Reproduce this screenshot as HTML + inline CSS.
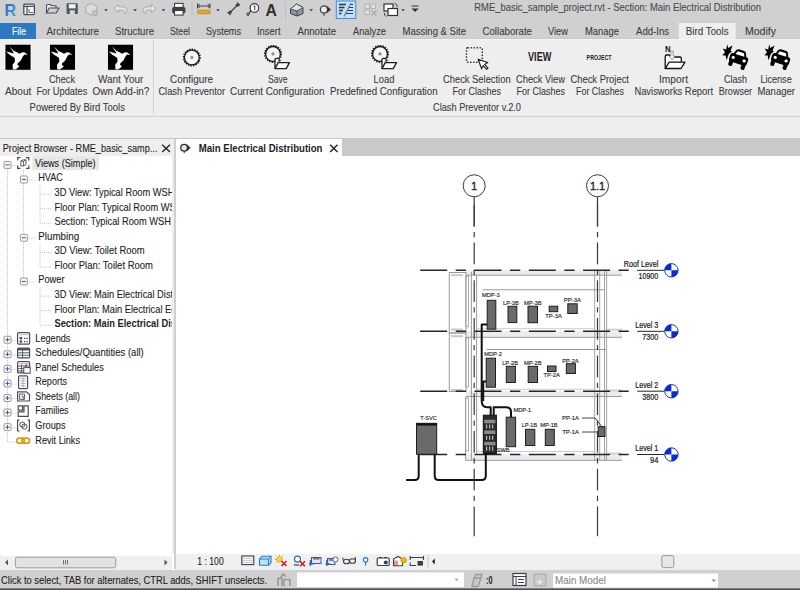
<!DOCTYPE html>
<html><head><meta charset="utf-8"><style>
html,body{margin:0;padding:0;width:800px;height:590px;overflow:hidden;background:#fff}
svg{display:block;font-family:"Liberation Sans",sans-serif}
</style></head><body>
<svg width="800" height="590" viewBox="0 0 800 590">
<rect x="0" y="0" width="800" height="39" fill="#d0d0d0" />
<rect x="0" y="39" width="800" height="77" fill="#eeeeee" />
<rect x="0" y="38" width="800" height="1" fill="#c9c9c9" />
<rect x="0" y="39" width="800" height="1" fill="#f4f4f4" />
<rect x="0" y="116" width="800" height="1" fill="#d2d2d2" />
<rect x="0" y="117" width="800" height="21" fill="#eeeeee" />
<rect x="0" y="138" width="800" height="1" fill="#c6c6c6" />
<text x="474.3" y="11.3" font-size="10.2" fill="#4a4a4a" textLength="286.7" lengthAdjust="spacingAndGlyphs"  stroke="#4a4a4a" stroke-width="0.1">RME_basic_sample_project.rvt - Section: Main Electrical Distribution</text>
<rect x="0" y="23" width="36" height="16" fill="#2b79c2" />
<text x="12" y="34.5" font-size="10.2" fill="#ffffff" textLength="14" lengthAdjust="spacingAndGlyphs"  stroke="#ffffff" stroke-width="0.1">File</text>
<rect x="678.7" y="23" width="57" height="16" fill="#eeeeee" />
<text x="46.5" y="34.5" font-size="10.2" fill="#3c3c3c" textLength="52.5" lengthAdjust="spacingAndGlyphs"  stroke="#3c3c3c" stroke-width="0.1">Architecture</text>
<text x="115" y="34.5" font-size="10.2" fill="#3c3c3c" textLength="39" lengthAdjust="spacingAndGlyphs"  stroke="#3c3c3c" stroke-width="0.1">Structure</text>
<text x="170" y="34.5" font-size="10.2" fill="#3c3c3c" textLength="20" lengthAdjust="spacingAndGlyphs"  stroke="#3c3c3c" stroke-width="0.1">Steel</text>
<text x="206" y="34.5" font-size="10.2" fill="#3c3c3c" textLength="35" lengthAdjust="spacingAndGlyphs"  stroke="#3c3c3c" stroke-width="0.1">Systems</text>
<text x="257" y="34.5" font-size="10.2" fill="#3c3c3c" textLength="23.5" lengthAdjust="spacingAndGlyphs"  stroke="#3c3c3c" stroke-width="0.1">Insert</text>
<text x="297.5" y="34.5" font-size="10.2" fill="#3c3c3c" textLength="38.5" lengthAdjust="spacingAndGlyphs"  stroke="#3c3c3c" stroke-width="0.1">Annotate</text>
<text x="353" y="34.5" font-size="10.2" fill="#3c3c3c" textLength="33" lengthAdjust="spacingAndGlyphs"  stroke="#3c3c3c" stroke-width="0.1">Analyze</text>
<text x="402.5" y="34.5" font-size="10.2" fill="#3c3c3c" textLength="63.5" lengthAdjust="spacingAndGlyphs"  stroke="#3c3c3c" stroke-width="0.1">Massing &amp; Site</text>
<text x="482.5" y="34.5" font-size="10.2" fill="#3c3c3c" textLength="49.5" lengthAdjust="spacingAndGlyphs"  stroke="#3c3c3c" stroke-width="0.1">Collaborate</text>
<text x="548" y="34.5" font-size="10.2" fill="#3c3c3c" textLength="20" lengthAdjust="spacingAndGlyphs"  stroke="#3c3c3c" stroke-width="0.1">View</text>
<text x="585" y="34.5" font-size="10.2" fill="#3c3c3c" textLength="33.9" lengthAdjust="spacingAndGlyphs"  stroke="#3c3c3c" stroke-width="0.1">Manage</text>
<text x="636" y="34.5" font-size="10.2" fill="#3c3c3c" textLength="33" lengthAdjust="spacingAndGlyphs"  stroke="#3c3c3c" stroke-width="0.1">Add-Ins</text>
<text x="685.8" y="34.5" font-size="10.2" fill="#3c3c3c" textLength="42.8" lengthAdjust="spacingAndGlyphs"  stroke="#3c3c3c" stroke-width="0.1">Bird Tools</text>
<text x="745" y="34.5" font-size="10.2" fill="#3c3c3c" textLength="31" lengthAdjust="spacingAndGlyphs"  stroke="#3c3c3c" stroke-width="0.1">Modify</text>
<text x="5" y="94.6" font-size="10.2" fill="#3c3c3c" textLength="26.4" lengthAdjust="spacingAndGlyphs"  stroke="#3c3c3c" stroke-width="0.1">About</text>
<text x="49" y="83.0" font-size="10.2" fill="#3c3c3c" textLength="26" lengthAdjust="spacingAndGlyphs"  stroke="#3c3c3c" stroke-width="0.1">Check</text>
<text x="36.4" y="94.6" font-size="10.2" fill="#3c3c3c" textLength="51.0" lengthAdjust="spacingAndGlyphs"  stroke="#3c3c3c" stroke-width="0.1">For Updates</text>
<text x="98" y="83.0" font-size="10.2" fill="#3c3c3c" textLength="45.4" lengthAdjust="spacingAndGlyphs"  stroke="#3c3c3c" stroke-width="0.1">Want Your</text>
<text x="92.6" y="94.6" font-size="10.2" fill="#3c3c3c" textLength="56.8" lengthAdjust="spacingAndGlyphs"  stroke="#3c3c3c" stroke-width="0.1">Own Add-in?</text>
<text x="29.6" y="111.4" font-size="10.2" fill="#3c3c3c" textLength="95.4" lengthAdjust="spacingAndGlyphs"  stroke="#3c3c3c" stroke-width="0.1">Powered By Bird Tools</text>
<rect x="153" y="40" width="1" height="75" fill="#d4d4d4" />
<text x="170" y="83.0" font-size="10.2" fill="#3c3c3c" textLength="43" lengthAdjust="spacingAndGlyphs"  stroke="#3c3c3c" stroke-width="0.1">Configure</text>
<text x="158.4" y="94.6" font-size="10.2" fill="#3c3c3c" textLength="66.6" lengthAdjust="spacingAndGlyphs"  stroke="#3c3c3c" stroke-width="0.1">Clash Preventor</text>
<text x="268" y="83.0" font-size="10.2" fill="#3c3c3c" textLength="19.6" lengthAdjust="spacingAndGlyphs"  stroke="#3c3c3c" stroke-width="0.1">Save</text>
<text x="230" y="94.6" font-size="10.2" fill="#3c3c3c" textLength="94.4" lengthAdjust="spacingAndGlyphs"  stroke="#3c3c3c" stroke-width="0.1">Current Configuration</text>
<text x="373.6" y="83.0" font-size="10.2" fill="#3c3c3c" textLength="20.8" lengthAdjust="spacingAndGlyphs"  stroke="#3c3c3c" stroke-width="0.1">Load</text>
<text x="330" y="94.6" font-size="10.2" fill="#3c3c3c" textLength="107.6" lengthAdjust="spacingAndGlyphs"  stroke="#3c3c3c" stroke-width="0.1">Predefined Configuration</text>
<text x="443" y="83.0" font-size="10.2" fill="#3c3c3c" textLength="67.6" lengthAdjust="spacingAndGlyphs"  stroke="#3c3c3c" stroke-width="0.1">Check Selection</text>
<text x="452.6" y="94.6" font-size="10.2" fill="#3c3c3c" textLength="48.4" lengthAdjust="spacingAndGlyphs"  stroke="#3c3c3c" stroke-width="0.1">For Clashes</text>
<text x="516" y="83.0" font-size="10.2" fill="#3c3c3c" textLength="49" lengthAdjust="spacingAndGlyphs"  stroke="#3c3c3c" stroke-width="0.1">Check View</text>
<text x="516.6" y="94.6" font-size="10.2" fill="#3c3c3c" textLength="48.4" lengthAdjust="spacingAndGlyphs"  stroke="#3c3c3c" stroke-width="0.1">For Clashes</text>
<text x="570.4" y="83.0" font-size="10.2" fill="#3c3c3c" textLength="58.6" lengthAdjust="spacingAndGlyphs"  stroke="#3c3c3c" stroke-width="0.1">Check Project</text>
<text x="576" y="94.6" font-size="10.2" fill="#3c3c3c" textLength="48" lengthAdjust="spacingAndGlyphs"  stroke="#3c3c3c" stroke-width="0.1">For Clashes</text>
<text x="659" y="83.0" font-size="10.2" fill="#3c3c3c" textLength="29" lengthAdjust="spacingAndGlyphs"  stroke="#3c3c3c" stroke-width="0.1">Import</text>
<text x="634.4" y="94.6" font-size="10.2" fill="#3c3c3c" textLength="78.6" lengthAdjust="spacingAndGlyphs"  stroke="#3c3c3c" stroke-width="0.1">Navisworks Report</text>
<text x="723.9" y="83.0" font-size="10.2" fill="#3c3c3c" textLength="23.1" lengthAdjust="spacingAndGlyphs"  stroke="#3c3c3c" stroke-width="0.1">Clash</text>
<text x="718.8" y="94.6" font-size="10.2" fill="#3c3c3c" textLength="33.2" lengthAdjust="spacingAndGlyphs"  stroke="#3c3c3c" stroke-width="0.1">Browser</text>
<text x="760.4" y="83.0" font-size="10.2" fill="#3c3c3c" textLength="31.3" lengthAdjust="spacingAndGlyphs"  stroke="#3c3c3c" stroke-width="0.1">License</text>
<text x="757.4" y="94.6" font-size="10.2" fill="#3c3c3c" textLength="37.6" lengthAdjust="spacingAndGlyphs"  stroke="#3c3c3c" stroke-width="0.1">Manager</text>
<text x="433" y="111.4" font-size="10.2" fill="#3c3c3c" textLength="88" lengthAdjust="spacingAndGlyphs"  stroke="#3c3c3c" stroke-width="0.1">Clash Preventor v.2.0</text>
<defs><linearGradient id="rg" x1="0" y1="0" x2="1" y2="1"><stop offset="0" stop-color="#2a5cb8"/><stop offset="1" stop-color="#3fb0e8"/></linearGradient></defs>
<text x="4.6" y="16.1" font-size="16.5" fill="url(#rg)" font-weight="bold" textLength="11.6" lengthAdjust="spacingAndGlyphs" >R</text>
<rect x="23.8" y="4.2" width="10.6" height="10.4" rx="1" fill="#f4f4f4" stroke="#4a5058" stroke-width="1.3"/>
<path d="M23.8,6.3 H34.4 M27,6.3 V14.6" stroke="#4a5058" stroke-width="1.2" fill="none"/>
<path d="M29,9 V12.5 H33" stroke="#4a5058" stroke-width="0.8" fill="none"/>
<path d="M46.5,13 V5.5 Q46.5,4.5 47.5,4.5 H50.5 L51.5,5.8 H56 V8" fill="#e8eaee" stroke="#4a5058" stroke-width="1.1"/>
<path d="M46.5,13 L49.2,8 H59 L56.3,13 Z" fill="#c9ced6" stroke="#4a5058" stroke-width="1.1"/>
<rect x="66.6" y="3.2" width="11.2" height="10.9" rx="1" fill="#4b5563"/>
<rect x="68.8" y="4.2" width="6.8" height="4.2" fill="#f2f2f2" />
<rect x="69.8" y="10.3" width="5" height="3.8" fill="#d8d8d8" />
<path d="M91.3,3.3 L96.8,6.3 V12.3 L91.3,15.3 L85.8,12.3 V6.3 Z" fill="#dcdcdc" stroke="#a8a8a8" stroke-width="1"/>
<circle cx="95" cy="13" r="2.6" fill="#c8c8c8" stroke="#a0a0a0" stroke-width="0.8"/>
<path d="M104.2,9.2 h3.6 l-1.8,2 z" fill="#333"/>
<path d="M114,8.5 L118.5,4.5 V6.8 H122 Q127,6.8 127,10.8 Q127,13.5 124,13.5 Q125,12.3 124.5,11 Q124,10.2 122,10.2 H118.5 V12.5 Z" fill="#e4e4e4" stroke="#a6a6a6" stroke-width="0.9"/>
<path d="M133.2,9.2 h3.6 l-1.8,2 z" fill="#333"/>
<path d="M156,8.5 L151.5,4.5 V6.8 H148 Q143,6.8 143,10.8 Q143,13.5 146,13.5 Q145,12.3 145.5,11 Q146,10.2 148,10.2 H151.5 V12.5 Z" fill="#e4e4e4" stroke="#a6a6a6" stroke-width="0.9"/>
<path d="M161.7,9.2 h3.6 l-1.8,2 z" fill="#333"/>
<rect x="174.5" y="3.4" width="8.6" height="4" fill="#fff" stroke="#3a4048" stroke-width="1.1"/>
<rect x="172.2" y="7" width="13.2" height="6.2" rx="1.5" fill="#3a4048"/>
<rect x="174.5" y="10.5" width="8.6" height="4.6" fill="#fff" stroke="#3a4048" stroke-width="1.1"/>
<rect x="191.5" y="2" width="1" height="17" fill="#bdbdbd" />
<path d="M197.5,6 H210 M197.5,6 l2.3,-1.8 M197.5,6 l2.3,1.8 M210,6 l-2.3,-1.8 M210,6 l-2.3,1.8 M197.5,3.5 V8.5 M210,3.5 V8.5" stroke="#3a4048" stroke-width="1" fill="none"/>
<rect x="197.3" y="10.3" width="13" height="3.5" rx="1.5" fill="#e8a91c" stroke="#a87508" stroke-width="0.6"/>
<path d="M216.2,9.2 h3.6 l-1.8,2 z" fill="#333"/>
<path d="M229,13.5 L238.5,4 M227.5,12 L230.5,15 M237,2.5 L240,5.5 M229,13.5 l1,-3 M229,13.5 l3,-1 M238.5,4 l-3,1 M238.5,4 l-1,3" stroke="#3a4048" stroke-width="1.1" fill="none"/>
<path d="M248.6,13.6 L251.4,10.2" stroke="#3a4048" stroke-width="1.2"/>
<circle cx="248" cy="14.2" r="1.3" fill="#8a9098" stroke="#3a4048" stroke-width="0.8"/>
<circle cx="254.4" cy="8" r="4.3" fill="#fff" stroke="#3a4048" stroke-width="1.3"/>
<path d="M253.6,6.6 L254.8,5.6 V10.4" stroke="#3a4048" stroke-width="1" fill="none"/>
<text x="265.6" y="15.8" font-size="16.5" fill="#2f2f2f" font-weight="bold" textLength="11.4" lengthAdjust="spacingAndGlyphs" >A</text>
<rect x="285" y="2" width="1" height="17" fill="#bdbdbd" />
<path d="M290.5,9 L296.5,4 L303,7.5 V13.5 L297,16 L290.5,13.5 Z" fill="#8f969e" stroke="#3a4048" stroke-width="1"/>
<path d="M290.5,9 L296.5,4 L303,7.5 L297,11 Z" fill="#dfe3e8" stroke="#3a4048" stroke-width="0.8"/>
<path d="M297,11 V16" stroke="#3a4048" stroke-width="0.8"/>
<path d="M309.4,9.2 h3.6 l-1.8,2 z" fill="#333"/>
<circle cx="324" cy="9.5" r="3.6" fill="#e8e8e8" stroke="#3a4048" stroke-width="1.3"/>
<path d="M327,6 L331,9.5 L327,13 Z" fill="#2e3238"/>
<path d="M324,13 V16" stroke="#3a4048" stroke-width="1"/>
<rect x="336.3" y="1" width="19.5" height="17.5" fill="#c8e0f6" stroke="#3c8ee0" stroke-width="1"/>
<path d="M339,4.5 H346" stroke="#2b3a4a" stroke-width="1.6"/>
<path d="M339,7.5 H344.5" stroke="#2b3a4a" stroke-width="1.6"/>
<path d="M339,10.5 H343" stroke="#2b3a4a" stroke-width="1.6"/>
<path d="M339,13.5 H341.5" stroke="#2b3a4a" stroke-width="1.6"/>
<path d="M350,4.5 H353" stroke="#2b3a4a" stroke-width="1"/>
<path d="M348.5,7.5 H353" stroke="#2b3a4a" stroke-width="1"/>
<path d="M347,10.5 H353" stroke="#2b3a4a" stroke-width="1"/>
<path d="M345.5,13.5 H353" stroke="#2b3a4a" stroke-width="1"/>
<path d="M351,3 L344,16.5" stroke="#3c8ee0" stroke-width="1.3"/>
<path d="M365,4 h4.5 v4.5 h-4.5z M371,4 h4.5 v4.5 h-4.5z M365,10 h4.5 v4.5 h-4.5z" fill="#e2e2e2" stroke="#b0b0b0" stroke-width="0.9"/>
<path d="M371.5,10.5 L376.5,15.5 M376.5,10.5 L371.5,15.5" stroke="#a8a8a8" stroke-width="1.2"/>
<rect x="384" y="4" width="9" height="7" fill="#fff" stroke="#2e3238" stroke-width="1.2"/>
<rect x="388" y="8.5" width="9.5" height="7" fill="#fff" stroke="#2e3238" stroke-width="1.2"/>
<path d="M394.5,3 l2.5,2 v2 M384.5,13 v2 l2,1.5" stroke="#2e3238" stroke-width="0.9" fill="none"/>
<path d="M401.3,9.2 h3.6 l-1.8,2 z" fill="#333"/>
<path d="M411.5,6 h7.2" stroke="#333" stroke-width="1"/>
<path d="M411.5,8.5 h7.2 l-3.6,3.5 z" fill="#333"/>
<rect x="5" y="44.2" width="26" height="26" fill="#000" stroke="#fff" stroke-width="0.8"/>
<path transform="translate(5,44.2)" d="M4.5,2.2 L9,6.8 L11.5,7.8 L14.5,9.6 L17.5,8 L19.8,8.2 L22.8,10.8 L19.5,10.2 L17.8,12.4 L15.8,16.4 L12.8,19 L12.4,20.6 L14.4,22.4 L10.6,25.2 L7.8,25 L7.6,20.6 L10,17.4 L9.6,13.6 L5,10.8 L1.2,7.4 L5.2,8.4 L8.6,9.4 L8.2,7.8 Z" fill="#fff"/>
<rect x="49.4" y="44.2" width="26" height="26" fill="#000" stroke="#fff" stroke-width="0.8"/>
<path transform="translate(49.4,44.2)" d="M4.5,2.2 L9,6.8 L11.5,7.8 L14.5,9.6 L17.5,8 L19.8,8.2 L22.8,10.8 L19.5,10.2 L17.8,12.4 L15.8,16.4 L12.8,19 L12.4,20.6 L14.4,22.4 L10.6,25.2 L7.8,25 L7.6,20.6 L10,17.4 L9.6,13.6 L5,10.8 L1.2,7.4 L5.2,8.4 L8.6,9.4 L8.2,7.8 Z" fill="#fff"/>
<rect x="107.6" y="44.2" width="26" height="26" fill="#000" stroke="#fff" stroke-width="0.8"/>
<path transform="translate(107.6,44.2)" d="M4.5,2.2 L9,6.8 L11.5,7.8 L14.5,9.6 L17.5,8 L19.8,8.2 L22.8,10.8 L19.5,10.2 L17.8,12.4 L15.8,16.4 L12.8,19 L12.4,20.6 L14.4,22.4 L10.6,25.2 L7.8,25 L7.6,20.6 L10,17.4 L9.6,13.6 L5,10.8 L1.2,7.4 L5.2,8.4 L8.6,9.4 L8.2,7.8 Z" fill="#fff"/>
<circle cx="191.8" cy="57.5" r="8.2" fill="none" stroke="#1a1a1a" stroke-width="1.6" stroke-dasharray="1.4 1.15"/>
<circle cx="191.8" cy="57.5" r="7.3999999999999995" fill="#f6f6f6" stroke="#1a1a1a" stroke-width="1.3"/>
<circle cx="191.8" cy="57.5" r="1.2" fill="#c8c8c8" stroke="#6a6a6a" stroke-width="0.8"/>
<circle cx="273" cy="53.9" r="8.2" fill="none" stroke="#1a1a1a" stroke-width="1.6" stroke-dasharray="1.4 1.15"/>
<circle cx="273" cy="53.9" r="7.3999999999999995" fill="#f6f6f6" stroke="#1a1a1a" stroke-width="1.3"/>
<circle cx="273" cy="53.9" r="1.2" fill="#c8c8c8" stroke="#6a6a6a" stroke-width="0.8"/>
<path d="M275,68.6 V59.599999999999994 Q275,58.3 276.2,58.3 H279 L(280.5,),59.8 H285 V62.599999999999994" fill="#fff" stroke="#1e1e1e" stroke-width="1.3"/>
<path d="M275,68.6 L278.2,62.599999999999994 H289.5 L286.2,68.6 Z" fill="#fff" stroke="#1e1e1e" stroke-width="1.3" stroke-linejoin="round"/>
<path d="M279.5,56.5 V61.5 M277.8,59.8 l1.7,2 l1.7,-2" stroke="#444" stroke-width="0.9" fill="none"/>
<circle cx="380" cy="53.9" r="8.2" fill="none" stroke="#1a1a1a" stroke-width="1.6" stroke-dasharray="1.4 1.15"/>
<circle cx="380" cy="53.9" r="7.3999999999999995" fill="#f6f6f6" stroke="#1a1a1a" stroke-width="1.3"/>
<circle cx="380" cy="53.9" r="1.2" fill="#c8c8c8" stroke="#6a6a6a" stroke-width="0.8"/>
<path d="M382,68.6 V59.599999999999994 Q382,58.3 383.2,58.3 H386 L(387.5,),59.8 H392 V62.599999999999994" fill="#fff" stroke="#1e1e1e" stroke-width="1.3"/>
<path d="M382,68.6 L385.2,62.599999999999994 H396.5 L393.2,68.6 Z" fill="#fff" stroke="#1e1e1e" stroke-width="1.3" stroke-linejoin="round"/>
<path d="M386.5,56.5 V61.5 M384.8,59.8 l1.7,2 l1.7,-2" stroke="#444" stroke-width="0.9" fill="none"/>
<rect x="466.5" y="47.7" width="15.8" height="14.6" rx="1" fill="none" stroke="#2a3340" stroke-width="1.4" stroke-dasharray="1.4 1.6"/>
<path d="M478.1,59.2 L487.8,62.6 L484.6,64.4 L488,68.2 L486.6,69.3 L483.2,65.6 L481.6,68.8 Z" fill="#fff" stroke="#1e2630" stroke-width="1.2" stroke-linejoin="round"/>
<text x="528" y="61.2" font-size="12" fill="#1e1e1e" font-weight="bold" textLength="23.4" lengthAdjust="spacingAndGlyphs" >VIEW</text>
<text x="586.6" y="60.2" font-size="7.6" fill="#1e1e1e" font-weight="bold" textLength="25" lengthAdjust="spacingAndGlyphs" >PROJECT</text>
<text x="665" y="51.6" font-size="8.2" fill="#111" font-weight="bold" textLength="5.6" lengthAdjust="spacingAndGlyphs" >N</text>
<path d="M665.2,68.5 V56.5 Q665.2,55 666.7,55 H669.5 L671.5,57 H680 Q681.3,57 681.3,58.3 V61.8" fill="#fff" stroke="#111" stroke-width="1.3"/>
<path d="M665.2,68.5 L669.2,62.2 H685 L681,68.5 Z" fill="#fff" stroke="#111" stroke-width="1.3" stroke-linejoin="round"/>
<path d="M670.8,51 H673.2 V56 H675 L672,60 L669,56 H670.8 Z" fill="#f4f4f4" stroke="#888" stroke-width="0.8"/>
<g transform="translate(719,42)"><path d="M8.2,2.2 L9.2,6 L13.6,3.6 L11.6,8.4 L12.8,9.4 L9.8,12 L7.6,18.2 L6.6,13.4 L3.2,13.2 L6,10.4 L3.8,6.6 L7.2,7.4 Z" fill="#000"/><g transform="translate(19.8,16.8) rotate(18) scale(1.06)"><path d="M-6.5,-3 L-4.6,-7.4 Q-4,-8.6 -2.6,-8.6 H2.6 Q4,-8.6 4.6,-7.4 L6.5,-3 Z" fill="#000"/><rect x="-8.8" y="-3.6" width="17.6" height="8.4" rx="2.4" fill="#000"/><rect x="-8" y="3" width="3.8" height="5.8" rx="1.2" fill="#000"/><rect x="4.2" y="3" width="3.8" height="5.8" rx="1.2" fill="#000"/><path d="M-4.3,-3.4 L-3.1,-6.6 H3.1 L4.3,-3.4 Z" fill="#fff"/><ellipse cx="-5.4" cy="0.4" rx="1.6" ry="1.4" fill="#fff"/><ellipse cx="5.4" cy="0.4" rx="1.6" ry="1.4" fill="#fff"/></g></g>
<g transform="translate(761,42)"><path d="M8.2,2.2 L9.2,6 L13.6,3.6 L11.6,8.4 L12.8,9.4 L9.8,12 L7.6,18.2 L6.6,13.4 L3.2,13.2 L6,10.4 L3.8,6.6 L7.2,7.4 Z" fill="#000"/><g transform="translate(19.8,16.8) rotate(18) scale(1.06)"><path d="M-6.5,-3 L-4.6,-7.4 Q-4,-8.6 -2.6,-8.6 H2.6 Q4,-8.6 4.6,-7.4 L6.5,-3 Z" fill="#000"/><rect x="-8.8" y="-3.6" width="17.6" height="8.4" rx="2.4" fill="#000"/><rect x="-8" y="3" width="3.8" height="5.8" rx="1.2" fill="#000"/><rect x="4.2" y="3" width="3.8" height="5.8" rx="1.2" fill="#000"/><path d="M-4.3,-3.4 L-3.1,-6.6 H3.1 L4.3,-3.4 Z" fill="#fff"/><ellipse cx="-5.4" cy="0.4" rx="1.6" ry="1.4" fill="#fff"/><ellipse cx="5.4" cy="0.4" rx="1.6" ry="1.4" fill="#fff"/></g></g>
<rect x="0" y="139" width="174" height="17" fill="#eeeeee" />
<text x="2.75" y="151.8" font-size="10.2" fill="#1e1e1e" textLength="154.7" lengthAdjust="spacingAndGlyphs"  stroke="#1e1e1e" stroke-width="0.1">Project Browser - RME_basic_samp...</text>
<rect x="0" y="156" width="172" height="413" fill="#ffffff" />
<rect x="172" y="156" width="2" height="398" fill="#eeeeee" />
<rect x="174" y="139" width="2" height="430" fill="#cfcfcf" />
<defs><clipPath id="treeclip"><rect x="0" y="156" width="172" height="398"/></clipPath></defs>
<g clip-path="url(#treeclip)">
<rect x="32.4" y="156.2" width="66.6" height="14" fill="#e6e6e6" />
<line x1="7.5" y1="168" x2="7.5" y2="441.63" stroke="#c4c4c4" stroke-width="1" stroke-dasharray="1,1"/>
<line x1="7.5" y1="442.13" x2="17" y2="442.13" stroke="#c4c4c4" stroke-width="1" stroke-dasharray="1,1"/>
<line x1="23.5" y1="169" x2="23.5" y2="281.36" stroke="#c4c4c4" stroke-width="1" stroke-dasharray="1,1"/>
<line x1="11.5" y1="165.4" x2="17" y2="165.4" stroke="#c4c4c4" stroke-width="1" stroke-dasharray="1,1"/>
<rect x="4.0" y="161.4" width="7" height="7" rx="1" fill="#f6f6f6" stroke="#9a9a9a" stroke-width="1"/>
<line x1="5.5" y1="164.9" x2="9.5" y2="164.9" stroke="#3c5aa8" stroke-width="1"/>
<text x="35" y="166.8" font-size="10.2" fill="#1e1e1e" textLength="60.6" lengthAdjust="spacingAndGlyphs"  stroke="#1e1e1e" stroke-width="0.1">Views (Simple)</text>
<line x1="27.5" y1="179.97" x2="36" y2="179.97" stroke="#c4c4c4" stroke-width="1" stroke-dasharray="1,1"/>
<rect x="20.4" y="175.97" width="7" height="7" rx="1" fill="#f6f6f6" stroke="#9a9a9a" stroke-width="1"/>
<line x1="21.9" y1="179.47" x2="25.9" y2="179.47" stroke="#3c5aa8" stroke-width="1"/>
<text x="38.2" y="181.37" font-size="10.2" fill="#1e1e1e" textLength="24.8" lengthAdjust="spacingAndGlyphs"  stroke="#1e1e1e" stroke-width="0.1">HVAC</text>
<line x1="40" y1="185.37" x2="40" y2="222.78" stroke="#c4c4c4" stroke-width="1" stroke-dasharray="1,1"/>
<line x1="40" y1="194.14" x2="52" y2="194.14" stroke="#c4c4c4" stroke-width="1" stroke-dasharray="1,1"/>
<text x="54.5" y="195.94" font-size="10.2" fill="#1e1e1e" textLength="120.0" lengthAdjust="spacingAndGlyphs"  stroke="#1e1e1e" stroke-width="0.1">3D View: Typical Room WSH</text>
<line x1="40" y1="208.70999999999998" x2="52" y2="208.70999999999998" stroke="#c4c4c4" stroke-width="1" stroke-dasharray="1,1"/>
<text x="54.5" y="210.51" font-size="10.2" fill="#1e1e1e" textLength="127.9" lengthAdjust="spacingAndGlyphs"  stroke="#1e1e1e" stroke-width="0.1">Floor Plan: Typical Room WSH</text>
<line x1="40" y1="223.28" x2="52" y2="223.28" stroke="#c4c4c4" stroke-width="1" stroke-dasharray="1,1"/>
<text x="54.5" y="225.08" font-size="10.2" fill="#1e1e1e" textLength="116.5" lengthAdjust="spacingAndGlyphs"  stroke="#1e1e1e" stroke-width="0.1">Section: Typical Room WSH</text>
<line x1="27.5" y1="238.25" x2="36" y2="238.25" stroke="#c4c4c4" stroke-width="1" stroke-dasharray="1,1"/>
<rect x="20.4" y="234.25" width="7" height="7" rx="1" fill="#f6f6f6" stroke="#9a9a9a" stroke-width="1"/>
<line x1="21.9" y1="237.75" x2="25.9" y2="237.75" stroke="#3c5aa8" stroke-width="1"/>
<text x="38.2" y="239.65" font-size="10.2" fill="#1e1e1e" textLength="41.0" lengthAdjust="spacingAndGlyphs"  stroke="#1e1e1e" stroke-width="0.1">Plumbing</text>
<line x1="40" y1="243.65" x2="40" y2="266.49" stroke="#c4c4c4" stroke-width="1" stroke-dasharray="1,1"/>
<line x1="40" y1="252.42" x2="52" y2="252.42" stroke="#c4c4c4" stroke-width="1" stroke-dasharray="1,1"/>
<text x="54.5" y="254.22" font-size="10.2" fill="#1e1e1e" textLength="90.2" lengthAdjust="spacingAndGlyphs"  stroke="#1e1e1e" stroke-width="0.1">3D View: Toilet Room</text>
<line x1="40" y1="266.99" x2="52" y2="266.99" stroke="#c4c4c4" stroke-width="1" stroke-dasharray="1,1"/>
<text x="54.5" y="268.79" font-size="10.2" fill="#1e1e1e" textLength="98.5" lengthAdjust="spacingAndGlyphs"  stroke="#1e1e1e" stroke-width="0.1">Floor Plan: Toilet Room</text>
<line x1="27.5" y1="281.96000000000004" x2="36" y2="281.96000000000004" stroke="#c4c4c4" stroke-width="1" stroke-dasharray="1,1"/>
<rect x="20.4" y="277.96000000000004" width="7" height="7" rx="1" fill="#f6f6f6" stroke="#9a9a9a" stroke-width="1"/>
<line x1="21.9" y1="281.46000000000004" x2="25.9" y2="281.46000000000004" stroke="#3c5aa8" stroke-width="1"/>
<text x="38.2" y="283.36" font-size="10.2" fill="#1e1e1e" textLength="26.5" lengthAdjust="spacingAndGlyphs"  stroke="#1e1e1e" stroke-width="0.1">Power</text>
<line x1="40" y1="287.36" x2="40" y2="324.77" stroke="#c4c4c4" stroke-width="1" stroke-dasharray="1,1"/>
<line x1="40" y1="296.13" x2="52" y2="296.13" stroke="#c4c4c4" stroke-width="1" stroke-dasharray="1,1"/>
<text x="54.5" y="297.93" font-size="10.2" fill="#1e1e1e" textLength="149.1" lengthAdjust="spacingAndGlyphs"  stroke="#1e1e1e" stroke-width="0.1">3D View: Main Electrical Distribution</text>
<line x1="40" y1="310.7" x2="52" y2="310.7" stroke="#c4c4c4" stroke-width="1" stroke-dasharray="1,1"/>
<text x="54.5" y="312.5" font-size="10.2" fill="#1e1e1e" textLength="155.0" lengthAdjust="spacingAndGlyphs"  stroke="#1e1e1e" stroke-width="0.1">Floor Plan: Main Electrical Equipment</text>
<line x1="40" y1="325.27" x2="52" y2="325.27" stroke="#c4c4c4" stroke-width="1" stroke-dasharray="1,1"/>
<text x="54.5" y="327.07" font-size="10.2" fill="#1e1e1e" font-weight="bold" textLength="159.1" lengthAdjust="spacingAndGlyphs" >Section: Main Electrical Distribution</text>
<line x1="11.5" y1="340.24" x2="17" y2="340.24" stroke="#c4c4c4" stroke-width="1" stroke-dasharray="1,1"/>
<rect x="4.0" y="336.24" width="7" height="7" rx="1" fill="#f6f6f6" stroke="#9a9a9a" stroke-width="1"/>
<line x1="5.5" y1="339.74" x2="9.5" y2="339.74" stroke="#3c5aa8" stroke-width="1"/>
<line x1="7.5" y1="337.74" x2="7.5" y2="341.74" stroke="#3c5aa8" stroke-width="1"/>
<text x="35.3" y="341.64" font-size="10.2" fill="#1e1e1e" textLength="35.1" lengthAdjust="spacingAndGlyphs"  stroke="#1e1e1e" stroke-width="0.1">Legends</text>
<line x1="11.5" y1="354.81" x2="17" y2="354.81" stroke="#c4c4c4" stroke-width="1" stroke-dasharray="1,1"/>
<rect x="4.0" y="350.81" width="7" height="7" rx="1" fill="#f6f6f6" stroke="#9a9a9a" stroke-width="1"/>
<line x1="5.5" y1="354.31" x2="9.5" y2="354.31" stroke="#3c5aa8" stroke-width="1"/>
<line x1="7.5" y1="352.31" x2="7.5" y2="356.31" stroke="#3c5aa8" stroke-width="1"/>
<text x="35.3" y="356.21" font-size="10.2" fill="#1e1e1e" textLength="108.5" lengthAdjust="spacingAndGlyphs"  stroke="#1e1e1e" stroke-width="0.1">Schedules/Quantities (all)</text>
<line x1="11.5" y1="369.38" x2="17" y2="369.38" stroke="#c4c4c4" stroke-width="1" stroke-dasharray="1,1"/>
<rect x="4.0" y="365.38" width="7" height="7" rx="1" fill="#f6f6f6" stroke="#9a9a9a" stroke-width="1"/>
<line x1="5.5" y1="368.88" x2="9.5" y2="368.88" stroke="#3c5aa8" stroke-width="1"/>
<line x1="7.5" y1="366.88" x2="7.5" y2="370.88" stroke="#3c5aa8" stroke-width="1"/>
<text x="35.3" y="370.78" font-size="10.2" fill="#1e1e1e" textLength="68.4" lengthAdjust="spacingAndGlyphs"  stroke="#1e1e1e" stroke-width="0.1">Panel Schedules</text>
<line x1="11.5" y1="383.95000000000005" x2="17" y2="383.95000000000005" stroke="#c4c4c4" stroke-width="1" stroke-dasharray="1,1"/>
<rect x="4.0" y="379.95000000000005" width="7" height="7" rx="1" fill="#f6f6f6" stroke="#9a9a9a" stroke-width="1"/>
<line x1="5.5" y1="383.45000000000005" x2="9.5" y2="383.45000000000005" stroke="#3c5aa8" stroke-width="1"/>
<line x1="7.5" y1="381.45000000000005" x2="7.5" y2="385.45000000000005" stroke="#3c5aa8" stroke-width="1"/>
<text x="35.3" y="385.35" font-size="10.2" fill="#1e1e1e" textLength="31.7" lengthAdjust="spacingAndGlyphs"  stroke="#1e1e1e" stroke-width="0.1">Reports</text>
<line x1="11.5" y1="398.52000000000004" x2="17" y2="398.52000000000004" stroke="#c4c4c4" stroke-width="1" stroke-dasharray="1,1"/>
<rect x="4.0" y="394.52000000000004" width="7" height="7" rx="1" fill="#f6f6f6" stroke="#9a9a9a" stroke-width="1"/>
<line x1="5.5" y1="398.02000000000004" x2="9.5" y2="398.02000000000004" stroke="#3c5aa8" stroke-width="1"/>
<line x1="7.5" y1="396.02000000000004" x2="7.5" y2="400.02000000000004" stroke="#3c5aa8" stroke-width="1"/>
<text x="35.3" y="399.92" font-size="10.2" fill="#1e1e1e" textLength="44.7" lengthAdjust="spacingAndGlyphs"  stroke="#1e1e1e" stroke-width="0.1">Sheets (all)</text>
<line x1="11.5" y1="413.09000000000003" x2="17" y2="413.09000000000003" stroke="#c4c4c4" stroke-width="1" stroke-dasharray="1,1"/>
<rect x="4.0" y="409.09000000000003" width="7" height="7" rx="1" fill="#f6f6f6" stroke="#9a9a9a" stroke-width="1"/>
<line x1="5.5" y1="412.59000000000003" x2="9.5" y2="412.59000000000003" stroke="#3c5aa8" stroke-width="1"/>
<line x1="7.5" y1="410.59000000000003" x2="7.5" y2="414.59000000000003" stroke="#3c5aa8" stroke-width="1"/>
<text x="35.3" y="414.49" font-size="10.2" fill="#1e1e1e" textLength="33.3" lengthAdjust="spacingAndGlyphs"  stroke="#1e1e1e" stroke-width="0.1">Families</text>
<line x1="11.5" y1="427.66" x2="17" y2="427.66" stroke="#c4c4c4" stroke-width="1" stroke-dasharray="1,1"/>
<rect x="4.0" y="423.66" width="7" height="7" rx="1" fill="#f6f6f6" stroke="#9a9a9a" stroke-width="1"/>
<line x1="5.5" y1="427.16" x2="9.5" y2="427.16" stroke="#3c5aa8" stroke-width="1"/>
<line x1="7.5" y1="425.16" x2="7.5" y2="429.16" stroke="#3c5aa8" stroke-width="1"/>
<text x="35.3" y="429.06" font-size="10.2" fill="#1e1e1e" textLength="30.2" lengthAdjust="spacingAndGlyphs"  stroke="#1e1e1e" stroke-width="0.1">Groups</text>
<text x="35.3" y="443.63" font-size="10.2" fill="#1e1e1e" textLength="44.7" lengthAdjust="spacingAndGlyphs"  stroke="#1e1e1e" stroke-width="0.1">Revit Links</text>
<path d="M17.7,160.5 V157.7 H20.5 M26,157.7 H28.8 V160.5 M28.8,165.5 V168.3 H26 M20.5,168.3 H17.7 V165.5" stroke="#4a4f57" stroke-width="1.3" fill="none"/>
<path d="M20.8,161.2 L23.2,159.8 H26 V164.5 L23.6,166 H20.8 Z M20.8,161.2 H23.6 V166 M23.6,161.2 L26,159.8" stroke="#4a4f57" stroke-width="0.9" fill="none"/>
<rect x="17.6" y="332.5" width="12" height="11.6" rx="1" fill="#fff" stroke="#4a4f57" stroke-width="1.2"/>
<rect x="18.2" y="333.2" width="10.8" height="2" fill="#c8ccd2" />
<rect x="19.6" y="337" width="2.6" height="2.4" fill="#4a4f57"/><circle cx="20.9" cy="341.6" r="1.3" fill="#4a4f57"/>
<path d="M24,338.3 h4 M24,341.6 h4" stroke="#4a4f57" stroke-width="1.2" stroke-dasharray="1 0.6"/>
<rect x="17.6" y="348.2" width="12" height="9.6" rx="1" fill="#fff" stroke="#4a4f57" stroke-width="1.2"/>
<rect x="17.6" y="348.2" width="12" height="2.2" fill="#4a4f57" />
<path d="M18,352.8 H29.2 M18,355.2 H29.2 M22.6,350 V357.8" stroke="#4a4f57" stroke-width="0.9"/>
<rect x="17.6" y="361.5" width="12" height="11.4" rx="1" fill="#fff" stroke="#4a4f57" stroke-width="1.2"/>
<rect x="18.2" y="362.2" width="10.8" height="1.8" fill="#c8ccd2" />
<path d="M18,366 H25 M18,368.6 H24 M18,371 H24 M21.6,364.2 V372.6" stroke="#4a4f57" stroke-width="0.9"/>
<rect x="23.8" y="367.6" width="6.4" height="5.6" fill="#fff" stroke="#4a4f57" stroke-width="1"/>
<path d="M25,367 l1.2,-2.4 M28.5,366.6 l1,-1.4" stroke="#d02828" stroke-width="1.1"/><path d="M26.8,367 V364.3" stroke="#2848c8" stroke-width="1.2"/>
<rect x="18.6" y="375.8" width="9" height="12.8" rx="1" fill="#fff" stroke="#4a4f57" stroke-width="1.2"/>
<path d="M20.5,378.3 H25.7 M20.5,380.8 H25.7 M20.5,383.3 H25.7 M20.5,385.8 H25.7 M23,377.5 V387.5" stroke="#9aa0a8" stroke-width="0.8"/>
<path d="M17.6,391.8 H26.4 L29.5,394.6 V401 H17.6 Z" fill="#fff" stroke="#4a4f57" stroke-width="1.2"/>
<path d="M19.6,394 H24.6 V399.4 H19.6 Z M21.5,396 H23.2 V399.4" stroke="#4a4f57" stroke-width="0.9" fill="none"/>
<path d="M18.2,405.8 H22.6 V410.2 H18.2 Z M24,405.8 H28.2 V416.4 H18.2 V411.8 H24 Z" fill="#fff" stroke="#4a4f57" stroke-width="1.2"/>
<path d="M19.4,420.2 H17.6 V430.8 H19.4 M27.6,420.2 H29.4 V430.8 H27.6" stroke="#4a4f57" stroke-width="1.2" fill="none"/>
<circle cx="22.4" cy="424.6" r="2.6" fill="none" stroke="#4a4f57" stroke-width="1"/><circle cx="24.4" cy="426.6" r="2.6" fill="none" stroke="#4a4f57" stroke-width="1"/>
<rect x="16.8" y="438.2" width="7.6" height="5" rx="2.5" fill="none" stroke="#d4a017" stroke-width="1.8"/>
<rect x="22" y="438.2" width="7.6" height="5" rx="2.5" fill="none" stroke="#d4a017" stroke-width="1.8"/>
</g>
<rect x="176" y="139" width="624" height="17" fill="#c9c9c9" />
<rect x="176" y="139" width="166" height="17" fill="#ffffff" />
<rect x="176" y="156" width="624" height="398" fill="#ffffff" />
<text x="198.75" y="152.3" font-size="10.2" fill="#1e1e1e" font-weight="bold" textLength="123.75" lengthAdjust="spacingAndGlyphs" >Main Electrical Distribution</text>
<defs><clipPath id="viewclip"><rect x="176" y="156" width="624" height="398"/></clipPath></defs>
<g clip-path="url(#viewclip)">
<rect x="466" y="270.3" width="156" height="4.899999999999977" fill="#ececf0" />
<line x1="466" y1="275.2" x2="622" y2="275.2" stroke="#9a9a9a" stroke-width="1" />
<rect x="466" y="331.3" width="156" height="6.0" fill="#ececf0" />
<line x1="466" y1="337.3" x2="622" y2="337.3" stroke="#9a9a9a" stroke-width="1" />
<rect x="466" y="391.2" width="156" height="5.300000000000011" fill="#ececf0" />
<line x1="466" y1="396.5" x2="622" y2="396.5" stroke="#9a9a9a" stroke-width="1" />
<rect x="465.6" y="454.5" width="156.39999999999998" height="5.800000000000011" fill="#ececf0" />
<line x1="465.6" y1="460.3" x2="622" y2="460.3" stroke="#9a9a9a" stroke-width="1" />
<line x1="465.6" y1="454.5" x2="465.6" y2="460.3" stroke="#9a9a9a" stroke-width="1" />
<rect x="449.3" y="272.5" width="16.7" height="60.5" fill="none" stroke="#9a9a9a" stroke-width="1"/>
<rect x="449.3" y="333" width="16.7" height="58.5" fill="none" stroke="#9a9a9a" stroke-width="1"/>
<rect x="451" y="274.2" width="12" height="2" fill="#c8c8c8" />
<rect x="451" y="328.6" width="12" height="2" fill="#c8c8c8" />
<rect x="451" y="335.2" width="12" height="2" fill="#c8c8c8" />
<rect x="451" y="389" width="12" height="2" fill="#c8c8c8" />
<rect x="465.7" y="276.5" width="2.8" height="50.19999999999999" fill="none" stroke="#9a9a9a" stroke-width="0.8"/>
<rect x="465.7" y="338" width="2.8" height="49" fill="none" stroke="#9a9a9a" stroke-width="0.8"/>
<rect x="465.7" y="398" width="2.8" height="53" fill="none" stroke="#9a9a9a" stroke-width="0.8"/>
<line x1="471.4" y1="272" x2="471.4" y2="460.3" stroke="#9a9a9a" stroke-width="1" />
<line x1="476.6" y1="275" x2="476.6" y2="454.5" stroke="#9a9a9a" stroke-width="1" />
<line x1="465.7" y1="397" x2="465.7" y2="454.5" stroke="#9a9a9a" stroke-width="1" />
<line x1="594.7" y1="270.3" x2="594.7" y2="460.3" stroke="#9a9a9a" stroke-width="0.9" />
<line x1="599.7" y1="270.3" x2="599.7" y2="460.3" stroke="#9a9a9a" stroke-width="0.9" />
<line x1="604.5" y1="270.3" x2="604.5" y2="460.3" stroke="#9a9a9a" stroke-width="0.9" />
<line x1="606.6" y1="270.3" x2="606.6" y2="460.3" stroke="#9a9a9a" stroke-width="0.9" />
<rect x="607" y="328.7" width="15" height="2" fill="#d0d0d0" />
<rect x="607" y="389.5" width="15" height="2" fill="#d0d0d0" />
<rect x="607" y="452.5" width="15" height="2" fill="#d0d0d0" />
<line x1="476.6" y1="328.7" x2="594.7" y2="328.7" stroke="#c0c0c0" stroke-width="0.8" />
<line x1="476.6" y1="389.3" x2="594.7" y2="389.3" stroke="#c0c0c0" stroke-width="0.8" />
<line x1="476.6" y1="451.5" x2="594.7" y2="451.5" stroke="#c0c0c0" stroke-width="0.8" />
<line x1="482.7" y1="289.8" x2="604" y2="289.8" stroke="#9a9a9a" stroke-width="1" />
<line x1="486.5" y1="349.5" x2="606.6" y2="349.5" stroke="#9a9a9a" stroke-width="1" />
<line x1="420.2" y1="270.3" x2="628.7" y2="270.3" stroke="#262626" stroke-width="1.5" stroke-dasharray="27 8.5 10.3 8.5"/>
<line x1="637.2" y1="270.3" x2="664.7" y2="270.3" stroke="#262626" stroke-width="1.0" />
<circle cx="671.4" cy="270.3" r="6.7" fill="#fff" stroke="#1838d0" stroke-width="1.0"/>
<path d="M671.4,270.3 L664.6999999999999,270.3 A6.7,6.7 0 0 1 671.4,263.6 Z" fill="#0a2ccc"/>
<path d="M671.4,270.3 L678.1,270.3 A6.7,6.7 0 0 1 671.4,277.0 Z" fill="#0a2ccc"/>
<line x1="420.2" y1="331.3" x2="628.7" y2="331.3" stroke="#262626" stroke-width="1.5" stroke-dasharray="27 8.5 10.3 8.5"/>
<line x1="637.2" y1="331.3" x2="664.7" y2="331.3" stroke="#262626" stroke-width="1.0" />
<circle cx="671.4" cy="331.3" r="6.7" fill="#fff" stroke="#1838d0" stroke-width="1.0"/>
<path d="M671.4,331.3 L664.6999999999999,331.3 A6.7,6.7 0 0 1 671.4,324.6 Z" fill="#0a2ccc"/>
<path d="M671.4,331.3 L678.1,331.3 A6.7,6.7 0 0 1 671.4,338.0 Z" fill="#0a2ccc"/>
<line x1="420.2" y1="391.2" x2="628.7" y2="391.2" stroke="#262626" stroke-width="1.5" stroke-dasharray="27 8.5 10.3 8.5"/>
<line x1="637.2" y1="391.2" x2="664.7" y2="391.2" stroke="#262626" stroke-width="1.0" />
<circle cx="671.4" cy="391.2" r="6.7" fill="#fff" stroke="#1838d0" stroke-width="1.0"/>
<path d="M671.4,391.2 L664.6999999999999,391.2 A6.7,6.7 0 0 1 671.4,384.5 Z" fill="#0a2ccc"/>
<path d="M671.4,391.2 L678.1,391.2 A6.7,6.7 0 0 1 671.4,397.9 Z" fill="#0a2ccc"/>
<line x1="420.2" y1="454.5" x2="628.7" y2="454.5" stroke="#262626" stroke-width="1.5" stroke-dasharray="27 8.5 10.3 8.5"/>
<line x1="637.2" y1="454.5" x2="664.7" y2="454.5" stroke="#262626" stroke-width="1.0" />
<circle cx="671.4" cy="454.5" r="6.7" fill="#fff" stroke="#1838d0" stroke-width="1.0"/>
<path d="M671.4,454.5 L664.6999999999999,454.5 A6.7,6.7 0 0 1 671.4,447.8 Z" fill="#0a2ccc"/>
<path d="M671.4,454.5 L678.1,454.5 A6.7,6.7 0 0 1 671.4,461.2 Z" fill="#0a2ccc"/>
<text x="623.8" y="266.90000000000003" font-size="8.2" fill="#1a1a1a" textLength="34.5" lengthAdjust="spacingAndGlyphs" stroke="#1a1a1a" stroke-width="0.2">Roof Level</text>
<text x="638.5" y="278.7" font-size="8.2" fill="#1a1a1a" textLength="19.8" lengthAdjust="spacingAndGlyphs" stroke="#1a1a1a" stroke-width="0.2">10900</text>
<text x="635.2" y="327.90000000000003" font-size="8.2" fill="#1a1a1a" textLength="23.1" lengthAdjust="spacingAndGlyphs" stroke="#1a1a1a" stroke-width="0.2">Level 3</text>
<text x="642.3" y="339.7" font-size="8.2" fill="#1a1a1a" textLength="16.0" lengthAdjust="spacingAndGlyphs" stroke="#1a1a1a" stroke-width="0.2">7300</text>
<text x="635.2" y="387.8" font-size="8.2" fill="#1a1a1a" textLength="23.1" lengthAdjust="spacingAndGlyphs" stroke="#1a1a1a" stroke-width="0.2">Level 2</text>
<text x="642.3" y="399.59999999999997" font-size="8.2" fill="#1a1a1a" textLength="16.0" lengthAdjust="spacingAndGlyphs" stroke="#1a1a1a" stroke-width="0.2">3800</text>
<text x="635.2" y="451.1" font-size="8.2" fill="#1a1a1a" textLength="23.1" lengthAdjust="spacingAndGlyphs" stroke="#1a1a1a" stroke-width="0.2">Level 1</text>
<text x="650" y="462.9" font-size="8.2" fill="#1a1a1a" textLength="8.3" lengthAdjust="spacingAndGlyphs" stroke="#1a1a1a" stroke-width="0.2">94</text>
<line x1="474.2" y1="197" x2="474.2" y2="226.6" stroke="#3a3a3a" stroke-width="1.2" />
<line x1="474.2" y1="204.8" x2="474.2" y2="506.4" stroke="#3a3a3a" stroke-width="1.2" stroke-dasharray="21.8 5.3 5.3 5.3"/>
<line x1="474.2" y1="506.4" x2="474.2" y2="536.25" stroke="#3a3a3a" stroke-width="1.2" />
<circle cx="474.2" cy="185.75" r="11" fill="#fff" stroke="#3a3a3a" stroke-width="1"/>
<text x="474.2" y="189.6" font-size="10.5" fill="#222" text-anchor="middle" stroke="#222" stroke-width="0.35">1</text>
<line x1="597.5" y1="197" x2="597.5" y2="226.6" stroke="#3a3a3a" stroke-width="1.2" />
<line x1="597.5" y1="204.8" x2="597.5" y2="506.4" stroke="#3a3a3a" stroke-width="1.2" stroke-dasharray="21.8 5.3 5.3 5.3"/>
<line x1="597.5" y1="506.4" x2="597.5" y2="536.25" stroke="#3a3a3a" stroke-width="1.2" />
<circle cx="597.5" cy="185.75" r="11" fill="#fff" stroke="#3a3a3a" stroke-width="1"/>
<text x="597.5" y="189.6" font-size="10.5" fill="#222" textLength="15.2" lengthAdjust="spacingAndGlyphs" text-anchor="middle" stroke="#222" stroke-width="0.35">1.1</text>
<rect x="487.2" y="300.3" width="8.6" height="28.9" fill="#6a6a6a" stroke="#1e1e1e" stroke-width="1"/>
<rect x="508" y="306.3" width="8.8" height="16.3" fill="#6a6a6a" stroke="#1e1e1e" stroke-width="1"/>
<rect x="528" y="306.2" width="9.5" height="16.5" fill="#6a6a6a" stroke="#1e1e1e" stroke-width="1"/>
<rect x="549.2" y="306.2" width="8.5" height="5.5" fill="#6a6a6a" stroke="#1e1e1e" stroke-width="1"/>
<rect x="567.8" y="303.8" width="9.4" height="9.7" fill="#6a6a6a" stroke="#1e1e1e" stroke-width="1"/>
<rect x="486.2" y="358.2" width="9.3" height="29.0" fill="#6a6a6a" stroke="#1e1e1e" stroke-width="1"/>
<rect x="506.3" y="366.3" width="9.1" height="16.2" fill="#6a6a6a" stroke="#1e1e1e" stroke-width="1"/>
<rect x="528.2" y="366.3" width="9.3" height="16.2" fill="#6a6a6a" stroke="#1e1e1e" stroke-width="1"/>
<rect x="547.5" y="366" width="8.5" height="5.5" fill="#6a6a6a" stroke="#1e1e1e" stroke-width="1"/>
<rect x="566.3" y="363.7" width="9.1" height="9.8" fill="#6a6a6a" stroke="#1e1e1e" stroke-width="1"/>
<rect x="506.2" y="417.2" width="9.4" height="29.5" fill="#6a6a6a" stroke="#1e1e1e" stroke-width="1"/>
<rect x="525.5" y="429.3" width="9.3" height="16.2" fill="#6a6a6a" stroke="#1e1e1e" stroke-width="1"/>
<rect x="545.3" y="429.3" width="9.0" height="16.2" fill="#6a6a6a" stroke="#1e1e1e" stroke-width="1"/>
<rect x="416.5" y="423.3" width="20.2" height="30.9" fill="#6a6a6a" stroke="#1e1e1e" stroke-width="1"/>
<rect x="598.2" y="426.7" width="6.8" height="9.8" fill="#6a6a6a" stroke="#1e1e1e" stroke-width="1"/>
<rect x="416.5" y="423.3" width="20.2" height="2.2" fill="#111" />
<rect x="483.3" y="415.2" width="13.1" height="38.3" fill="#2a2a2a" stroke="#111" stroke-width="1"/>
<rect x="484.3" y="419.7" width="11.1" height="3.6" fill="#8a8a8a" />
<rect x="484.3" y="430.4" width="11.1" height="3.6" fill="#8a8a8a" />
<rect x="484.3" y="441.8" width="11.1" height="3.6" fill="#8a8a8a" />
<rect x="486" y="424.5" width="1.2" height="4" fill="#bdbdbd" />
<rect x="489" y="424.5" width="1.2" height="4" fill="#bdbdbd" />
<rect x="492" y="424.5" width="1.2" height="4" fill="#bdbdbd" />
<rect x="486" y="435.8" width="1.2" height="4" fill="#bdbdbd" />
<rect x="489" y="435.8" width="1.2" height="4" fill="#bdbdbd" />
<rect x="492" y="435.8" width="1.2" height="4" fill="#bdbdbd" />
<rect x="486" y="446.6" width="1.2" height="4" fill="#bdbdbd" />
<rect x="489" y="446.6" width="1.2" height="4" fill="#bdbdbd" />
<rect x="492" y="446.6" width="1.2" height="4" fill="#bdbdbd" />
<text x="482" y="297" font-size="6.2" fill="#222" textLength="17.7" lengthAdjust="spacingAndGlyphs" stroke="#222" stroke-width="0.15">MDP-3</text>
<text x="503" y="305" font-size="6.2" fill="#222" textLength="15.7" lengthAdjust="spacingAndGlyphs" stroke="#222" stroke-width="0.15">LP-3B</text>
<text x="524" y="304.7" font-size="6.2" fill="#222" textLength="17.7" lengthAdjust="spacingAndGlyphs" stroke="#222" stroke-width="0.15">MP-3B</text>
<text x="545.3" y="318.2" font-size="6.2" fill="#222" textLength="16.5" lengthAdjust="spacingAndGlyphs" stroke="#222" stroke-width="0.15">TP-3A</text>
<text x="563.7" y="302.3" font-size="6.2" fill="#222" textLength="17.3" lengthAdjust="spacingAndGlyphs" stroke="#222" stroke-width="0.15">PP-3A</text>
<text x="484.2" y="355.7" font-size="6.2" fill="#222" textLength="17.6" lengthAdjust="spacingAndGlyphs" stroke="#222" stroke-width="0.15">MDP-2</text>
<text x="502.2" y="364.8" font-size="6.2" fill="#222" textLength="15.8" lengthAdjust="spacingAndGlyphs" stroke="#222" stroke-width="0.15">LP-2B</text>
<text x="524" y="364.8" font-size="6.2" fill="#222" textLength="17.7" lengthAdjust="spacingAndGlyphs" stroke="#222" stroke-width="0.15">MP-2B</text>
<text x="543.5" y="376.8" font-size="6.2" fill="#222" textLength="16.5" lengthAdjust="spacingAndGlyphs" stroke="#222" stroke-width="0.15">TP-2A</text>
<text x="562.2" y="362.7" font-size="6.2" fill="#222" textLength="16.5" lengthAdjust="spacingAndGlyphs" stroke="#222" stroke-width="0.15">PP-2A</text>
<text x="513.5" y="411.7" font-size="6.2" fill="#222" textLength="17.7" lengthAdjust="spacingAndGlyphs" stroke="#222" stroke-width="0.15">MDP-1</text>
<text x="521.7" y="427.2" font-size="6.2" fill="#222" textLength="15.5" lengthAdjust="spacingAndGlyphs" stroke="#222" stroke-width="0.15">LP-1B</text>
<text x="540.2" y="427.2" font-size="6.2" fill="#222" textLength="17.5" lengthAdjust="spacingAndGlyphs" stroke="#222" stroke-width="0.15">MP-1B</text>
<text x="562" y="420" font-size="6.2" fill="#222" textLength="17" lengthAdjust="spacingAndGlyphs" stroke="#222" stroke-width="0.15">PP-1A</text>
<text x="562.2" y="433.8" font-size="6.2" fill="#222" textLength="16.8" lengthAdjust="spacingAndGlyphs" stroke="#222" stroke-width="0.15">TP-1A</text>
<text x="420.2" y="420" font-size="6.2" fill="#222" textLength="16.5" lengthAdjust="spacingAndGlyphs" stroke="#222" stroke-width="0.15">T-SVC</text>
<text x="496.7" y="451.5" font-size="6.2" fill="#222" textLength="12.7" lengthAdjust="spacingAndGlyphs" stroke="#222" stroke-width="0.15">SWB</text>
<path d="M487,324.6 H481.7 V401 Q481.7,407.2 487,407.2 H490.7 V415.2" stroke="#111" stroke-width="2" fill="none" stroke-linejoin="round"/>
<path d="M486.2,381.5 H483.2 V401" stroke="#111" stroke-width="2" fill="none" stroke-linejoin="round"/>
<path d="M493.7,415.2 V407.2 H506 Q511,407.2 511,412 V417.2" stroke="#111" stroke-width="2" fill="none" stroke-linejoin="round"/>
<path d="M485.8,453.5 V476 Q485.8,480 481.8,480 H438.7 Q434.7,480 434.7,476 V454.2" stroke="#111" stroke-width="2" fill="none" stroke-linejoin="round"/>
<path d="M418.7,454.2 V476 Q418.7,480 414.7,480 H406" stroke="#111" stroke-width="2" fill="none" stroke-linejoin="round"/>
<path d="M582,418 H595 L603,428" stroke="#333" stroke-width="0.9" fill="none"/>
<path d="M582,432 H598" stroke="#333" stroke-width="0.9" fill="none"/>
</g>
<path d="M162.2,144.8 L170,152 M170,144.8 L162.2,152" stroke="#1e1e1e" stroke-width="1.3"/>
<path d="M330.2,144.8 L337.5,152 M337.5,144.8 L330.2,152" stroke="#1e1e1e" stroke-width="1.3"/>
<circle cx="184.2" cy="147.8" r="3.4" fill="#e6e8ec" stroke="#2e3238" stroke-width="1.3"/>
<path d="M186.8,144.2 L190.6,147.8 L186.8,151.4 Z" fill="#2e3238"/><path d="M184.2,151 V153.2" stroke="#2e3238" stroke-width="1"/>
<rect x="176" y="554" width="624" height="16" fill="#f0f0f0" />
<text x="197.3" y="564.5" font-size="10.2" fill="#1e1e1e" textLength="26.4" lengthAdjust="spacingAndGlyphs"  stroke="#1e1e1e" stroke-width="0.1">1 : 100</text>
<rect x="241.8" y="556" width="12" height="8.6" fill="#fff" stroke="#39404a" stroke-width="1.1"/>
<path d="M242.5,558.2 H253 M242.5,560.3 H253 M242.5,562.4 H253" stroke="#888" stroke-width="1" stroke-dasharray="1 1"/>
<path d="M259.5,559 L262,556.2 H271 V562.5 L268.5,565.2 H259.5 Z" fill="#bfe0f8" stroke="#2a7ac8" stroke-width="1.1"/>
<path d="M259.5,559 H268.5 V565.2 M268.5,559 L271,556.2" stroke="#2a7ac8" stroke-width="1" fill="none"/>
<circle cx="279.5" cy="559.5" r="2.6" fill="#ffd84a" stroke="#d09000" stroke-width="0.8"/>
<path d="M279.5,554.8 V556 M275,559.5 H276.2 M276.3,556.3 l0.8,0.8 M282.7,556.3 l-0.8,0.8 M276.3,562.7 l0.8,-0.8" stroke="#d09000" stroke-width="0.9"/>
<path d="M281.5,561 L286.5,566 M286.5,561 L281.5,566" stroke="#d41c1c" stroke-width="1.6"/>
<circle cx="297.5" cy="559.2" r="3" fill="#fff" stroke="#2a6ab8" stroke-width="1.2"/>
<path d="M294,565 H299" stroke="#39404a" stroke-width="1.2"/>
<path d="M300,561.3 L305,566.3 M305,561.3 L300,566.3" stroke="#d41c1c" stroke-width="1.6"/>
<rect x="311.5" y="557.5" width="9.5" height="6" fill="#dde8f6" stroke="#2a5ab8" stroke-width="1"/>
<path d="M313,558.8 H319.5" stroke="#d83030" stroke-width="1.4"/>
<path d="M309,563.8 H314 M310.5,560 V566" stroke="#2a6ab8" stroke-width="1.4"/>
<rect x="327.5" y="558.5" width="7.5" height="6" fill="#dde8f6" stroke="#2a5ab8" stroke-width="1"/>
<path d="M328.8,560 H333" stroke="#d83030" stroke-width="1.4"/>
<path d="M325.5,563.8 H329.5 M326.8,560 V566" stroke="#2a6ab8" stroke-width="1.4"/>
<circle cx="335.5" cy="559.5" r="2.6" fill="#fff" stroke="#2a6ab8" stroke-width="1"/>
<ellipse cx="346.5" cy="561.5" rx="3" ry="2.3" fill="none" stroke="#39404a" stroke-width="1.1"/><ellipse cx="352.5" cy="561" rx="3" ry="2.3" fill="none" stroke="#39404a" stroke-width="1.1"/>
<path d="M343.2,560.5 L342.8,557.5 M355.5,560 L355.2,557" stroke="#39404a" stroke-width="1"/>
<circle cx="365.6" cy="559.8" r="2.2" fill="#fff" stroke="#2a7ac8" stroke-width="1.2"/><path d="M365.6,562 V565.5" stroke="#2a7ac8" stroke-width="1.2"/>
<rect x="377.2" y="558" width="12" height="7.5" rx="1" fill="#fff" stroke="#39404a" stroke-width="1.2"/>
<path d="M379,557.5 h3 M384,557.5 h3" stroke="#39404a" stroke-width="1.2"/><circle cx="385.8" cy="562.6" r="2" fill="#39404a"/>
<path d="M393.5,565.8 V559 L398,556.5 L402.5,559 V565.8 Z" fill="#fff" stroke="#39404a" stroke-width="1.1"/>
<path d="M395,560.5 V565.5 M397,560.5 V565.5" stroke="#d02828" stroke-width="1"/>
<circle cx="403.6" cy="560.2" r="2.8" fill="#f6b400" stroke="#c88400" stroke-width="0.6"/>
<path d="M410.2,557.5 H423.5 M410.2,556 V560 M423.5,556 V560 M410.2,562.5 V565.5 H416" stroke="#39404a" stroke-width="1.1" fill="none"/>
<rect x="417.5" y="561" width="5.5" height="4.6" fill="#39404a"/>
<rect x="427.5" y="555" width="1" height="13" fill="#c8c8c8" />
<path d="M434.8,558.6 L432,561.4 L434.8,564.2 Z" fill="#222"/>
<rect x="661.8" y="555.6" width="12" height="12" rx="1.5" fill="#e6e6e6" stroke="#9c9c9c" stroke-width="1"/>
<rect x="0" y="556" width="172" height="14" fill="#f0f0f0" />
<path d="M8,559.5 L5,562.5 L8,565.5 Z" fill="#555"/>
<path d="M164.5,559.5 L167.5,562.5 L164.5,565.5 Z" fill="#555"/>
<rect x="15.4" y="557.2" width="100.4" height="10.6" rx="2" fill="#e2e2e2" stroke="#9c9c9c" stroke-width="1"/>
<path d="M63.5,560 V564.5 M65.5,560 V564.5 M67.5,560 V564.5" stroke="#666" stroke-width="0.9"/>
<rect x="0" y="570" width="800" height="18.3" fill="#d0d0d0" />
<rect x="0" y="588.3" width="800" height="1.7" fill="#505050" />
<text x="1.1" y="583.6" font-size="10.2" fill="#1e1e1e" textLength="266" lengthAdjust="spacingAndGlyphs"  stroke="#1e1e1e" stroke-width="0.1">Click to select, TAB for alternates, CTRL adds, SHIFT unselects.</text>
<rect x="297" y="572.5" width="167" height="14.5" fill="#ffffff" />
<rect x="553" y="573.5" width="165" height="14" fill="#ffffff" />
<text x="555" y="584.3" font-size="10.2" fill="#8a8a8a" textLength="51" lengthAdjust="spacingAndGlyphs"  stroke="#8a8a8a" stroke-width="0.1">Main Model</text>
<path d="M278,586 V578.5 H282 V586 M284,586 V579.5 H290 V586 M280.5,578 L283,574 L286,576.5" stroke="#9a9a9a" stroke-width="1.6" fill="none"/>
<path d="M454.5,578.8 h4 l-2,2.2z" fill="#9a9a9a"/>
<path d="M472,586.5 L474,578 H481 L478,586.5 Z M474,578 L476,574.5 H482 L481,578" stroke="#9a9a9a" stroke-width="1.3" fill="#c8c8c8"/>
<text x="486" y="584.2" font-size="10.2" fill="#1e1e1e" font-weight="bold" textLength="6.5" lengthAdjust="spacingAndGlyphs" >:0</text>
<rect x="513" y="573.5" width="13" height="12" fill="#fff" stroke="#39404a" stroke-width="1.2"/>
<path d="M513,576.5 H526 M516,576.5 V585.5 M518,579.5 H524 M518,582.5 H524" stroke="#39404a" stroke-width="1"/>
<rect x="534" y="574" width="12" height="12" fill="#c8c8c8" stroke="#a0a0a0" stroke-width="0.8"/>
<path d="M536,582 H541 M539,579.5 L541.5,582 L539,584.5" stroke="#eee" stroke-width="1.2" fill="none"/>
<path d="M711.5,579.5 h4.5 l-2.25,2.4z" fill="#8a8a8a"/>
</svg>
</body></html>
